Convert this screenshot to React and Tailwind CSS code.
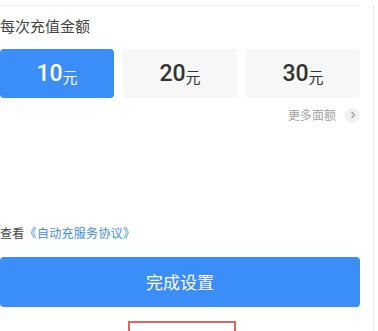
const AMOUNTS = [10, 20, 30];

function ChevronRight() {
	return (
		<svg width="8" height="8" viewBox="0 0 8 8" fill="none">
			<path d="M3 1.5L5.5 4L3 6.5" stroke="#9a9a9a" strokeWidth="1.2" strokeLinecap="round" strokeLinejoin="round" />
		</svg>
	);
}

export default function App() {
	const selected = 10;

	return (
		<div
			className="relative w-[378px] h-[331px] overflow-hidden bg-white"
			style={{ fontFamily: '"Noto Sans CJK SC", "Noto Sans", sans-serif' }}
		>
			<div className="w-[374px] h-full border-r border-[#ececec] pr-[13px]">
				<div className="mt-[5px] h-px w-[360px] bg-[#f3f3f3]" />

				<h3 className="mt-[9px] text-[15px] leading-[22px] text-[#444] font-normal">每次充值金额</h3>

				<div className="mt-[12px] grid grid-cols-3 gap-[9px] w-[360px]">
					{AMOUNTS.map(amount => (
						<button
							key={amount}
							className={
								amount === selected
									? "h-[49px] rounded-[4px] bg-[#3b8ef7] text-white flex items-center justify-center"
									: "h-[49px] rounded-[4px] bg-[#f7f7f7] text-[#333] flex items-center justify-center"
							}
						>
							<span className="text-[23px] leading-none font-medium" style={{ fontFamily: "Roboto, sans-serif" }}>
								{amount}
							</span>
							<span className="text-[15px] leading-none mt-[5px]">元</span>
						</button>
					))}
				</div>

				<div className="mt-[9px] w-[360px] flex items-center justify-end gap-[9px]">
					<span className="text-[12px] leading-[16px] text-[#a3a3a3]">更多面额</span>
					<span className="w-[15px] h-[15px] rounded-full bg-[#f0f0f0] flex items-center justify-center">
						<ChevronRight />
					</span>
				</div>

				<p className="mt-[102px] text-[12px] leading-[16px] text-[#444] tracking-[0.3px]">
					查看<a href="#" className="text-[#3d8ce0]">《自动充服务协议》</a>
				</p>

				<button className="mt-[16px] w-[360px] h-[50px] rounded-[4px] bg-[#3b8ef7] text-white text-[17px]">
					完成设置
				</button>

				<div className="mt-[14px] ml-[128px] w-[108px] h-[30px] border-2 border-[#e06262]" />
			</div>
		</div>
	);
}
